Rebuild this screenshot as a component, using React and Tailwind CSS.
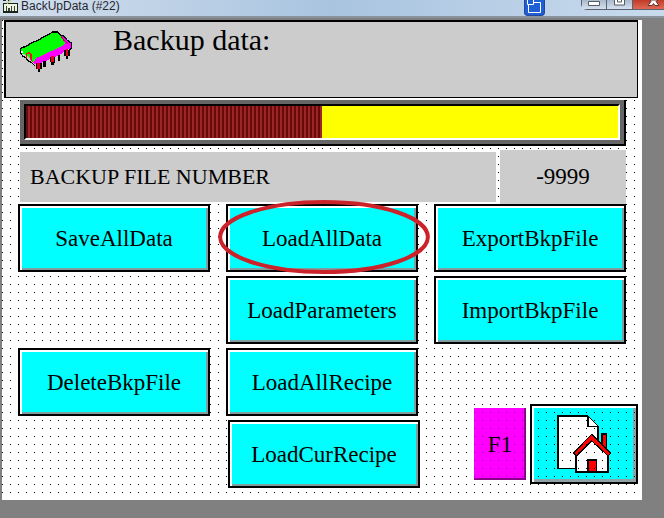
import React, { useState } from 'react';

const actions = [
    { label: 'SaveAllData', place: 'col-start-1 row-start-1' },
    { label: 'LoadAllData', place: 'col-start-2 row-start-1', circled: true },
    { label: 'ExportBkpFile', place: 'col-start-3 row-start-1' },
    { label: 'LoadParameters', place: 'col-start-2 row-start-2' },
    { label: 'ImportBkpFile', place: 'col-start-3 row-start-2' },
    { label: 'DeleteBkpFile', place: 'col-start-1 row-start-3' },
    { label: 'LoadAllRecipe', place: 'col-start-2 row-start-3' },
    { label: 'LoadCurRecipe', place: 'col-start-2 row-start-4 ml-0.5 -mr-0.5' },
];

const AppIcon = () => (
    <svg width="16" height="13" viewBox="0 0 16 13" shapeRendering="crispEdges" aria-hidden="true">
        <path d="M0 0h3v1H0zM5 0h2v1H5z" fill="#222" />
        <path d="M0 3h15v10H0z" fill="#1c2418" />
        <path d="M1 4h13v7H1z" fill="#eef3df" />
        <path d="M3 6h1v5H3zM5 8h2v3H5zM8 6h1v5H8zM11 6h1v5h-1z" fill="#39443a" />
        <path d="M3 3l3-3h2L5 4z" fill="#b9c98a" />
    </svg>
);

const ChipIcon = () => (
    <svg width="54" height="43" viewBox="58 88 162 129" shapeRendering="crispEdges" aria-hidden="true">
        {/* body */}
        <path d="M184 106l8 2 10 12 12 8v12l-10 8-28 16-26 12-38 16-10-4-10-12 6-8 84-42z" fill="#f0f" />
        {/* pins */}
        <path d="M108 186h18v18h-4v10h-8v-8h-6zM130 180h8v20h-8zM151 170h15v16h-4v6h-8v-8h-3zM174 162h8v18h-8zM194 148h17v18h-5v8h-7v-8h-5z" fill="#000" />
        <path d="M113 186h8v20h-8zM155 166h7v19h-7zM198 146h7v20h-7z" fill="#e80020" />
        <path d="M186 104l6 2 10 12 13 9v16l-6 6" fill="none" stroke="#000" strokeWidth="4" />
        {/* top face */}
        <path d="M62 160v-16l22-10 10-6 26-12 12-8 18-8 8-6h16l12 10 4 12 6 12-6 6-30 15-28 13-22 10-8 12-22-20-8-4z" fill="#0f0" />
        <path d="M62 160v-16l20-9 12-7 26-12 12-8 18-8 8-6h17l10 12" fill="none" stroke="#000" strokeWidth="4" />
        <path d="M64 158l6 10 8 2 6 10 10 4 12 12" fill="none" stroke="#000" strokeWidth="4" />
        <path d="M67 150v8" stroke="#fff" strokeWidth="4" />
        <path d="M80 172v-12l5-3h6l3 4v14l4 8" fill="none" stroke="#f01010" strokeWidth="4" />
        <path d="M184 106l8 12 12 10" fill="none" stroke="#c00060" strokeWidth="3" />
    </svg>
);

const HomeIcon = () => (
    <svg width="55" height="58" viewBox="48 27 165 174" shapeRendering="crispEdges" aria-hidden="true">
        <path d="M51 30h89l30 30v127H51z" fill="#fff" stroke="#000" strokeWidth="5" />
        <path d="M140 30v31h30" fill="#fff" stroke="#000" strokeWidth="5" />
        <path d="M183 84h13v46l-13-12z" fill="#f00" stroke="#000" strokeWidth="4" />
        <path d="M105 138l47-45 49 45v60h-96z" fill="#fff" stroke="#000" strokeWidth="5" />
        <path d="M98 141l54-56 57 56-8 9-49-46-46 46z" fill="#f00" stroke="#000" strokeWidth="3" />
        <path d="M141 162h25v36h-25z" fill="#f00" stroke="#000" strokeWidth="4" />
    </svg>
);

const TitleBar = () => (
    <header className="flex h-[18px] items-start border-b-2 border-[#8a939c] bg-linear-to-r from-[#d3dfed] via-[#a9c4e0] to-[#c9daec] pl-[3px]">
        <AppIcon />
        <h1 className="ml-0.5 font-['Liberation_Sans',Arial,sans-serif] text-xs leading-3 text-[#26262e]">BackUpData (#22)</h1>
        <button aria-label="Switch window" className="mr-9 ml-auto h-4 w-[21px] rounded-b-sm border border-t-0 border-[#24479c] bg-[#1f5fd6]">
            <svg width="19" height="15" viewBox="0 0 19 15" fill="none" stroke="#fff" aria-hidden="true">
                <path d="M8.500 2.500h7v10h-12v-8" />
                <path d="M2.500 0v4.500h6v-4.500" />
            </svg>
        </button>
        <div className="flex h-[10px] rounded-bl-md border-b border-l border-[#59626e]">
            <button aria-label="Minimize" className="w-[25px] border-r border-[#59626e] bg-linear-to-b from-[#a9bacd] to-[#d5e1ee]">
                <svg width="24" height="9" viewBox="0 0 24 9" aria-hidden="true">
                    <path d="M6.500 1.500h11v4h-11z" fill="#fff" stroke="#555c66" />
                </svg>
            </button>
            <button aria-label="Maximize" className="w-[26px] border-r border-[#59626e] bg-linear-to-b from-[#a9bacd] to-[#d5e1ee]">
                <svg width="25" height="9" viewBox="0 0 25 9" aria-hidden="true">
                    <path d="M7.500 -2v7h10v-7M10.500 -1v3h4v-3" fill="#fff" stroke="#555c66" />
                </svg>
            </button>
            <button aria-label="Close" className="w-[31px] bg-linear-to-b from-[#c03a28] to-[#df6a54]">
                <svg width="31" height="9" viewBox="0 0 31 9" aria-hidden="true">
                    <path d="M17 0h8l-2 1.500 3 4h-4l-1.500-2-1.500 2h-4l3-4z" fill="#fff" stroke="#6b3030" />
                </svg>
            </button>
        </div>
    </header>
);

const ActionButton = ({ label, place, circled }) => (
    <div className={`relative ${place}`}>
        <button className="h-full w-full border-2 border-black bg-[#0ff] pt-0.5 text-[23px] leading-7 shadow-[inset_2px_2px_#fff,inset_-2px_-2px_#7f9c9f]">
            {label}
        </button>
        {circled && (
            <svg className="pointer-events-none absolute -top-1 -left-2 z-10 h-[74px] w-[calc(100%+20px)] overflow-visible" aria-hidden="true">
                <ellipse cx="50%" cy="50%" rx="49%" ry="35" fill="none" stroke="#cc2229" strokeWidth="4" />
            </svg>
        )}
    </div>
);

const App = () => {
    const [progress] = useState(50);
    const [fileNumber] = useState(-9999);

    return (
        <div className="min-h-screen bg-[#808080] font-['Liberation_Serif','Times_New_Roman',serif] text-black">
            <TitleBar />

            <main className="mt-0.5 mr-[22px] ml-0.5 bg-white bg-[conic-gradient(from_270deg_at_1px_1px,#000_90deg,transparent_90deg)] bg-[length:8px_8px] pb-3">
                {/* Heading */}
                <section className="mr-1 ml-0.5 flex h-[78px] border-t-2 border-r border-b border-l-2 border-black bg-[#ccc] pt-0.5 pl-[13px]">
                    <div className="mt-1.5">
                        <ChipIcon />
                    </div>
                    <h2 className="ml-10 text-[30px] leading-8">Backup data:</h2>
                </section>

                {/* Progress */}
                <div className="mt-0.5 mr-4 ml-[18px] border-r-2 border-b-2 border-black">
                    <div className="border-4 border-[#666]">
                        <div
                            role="progressbar"
                            aria-label="Backup progress"
                            aria-valuenow={progress}
                            className="h-9 border-2 border-t-black border-r-white border-b-white border-l-black bg-[#ff0]"
                        >
                            <div
                                className="h-full bg-[repeating-linear-gradient(90deg,#660a0a_0,#660a0a_2px,#9c2626_2px,#9c2626_4px)]"
                                style={{ width: `${progress}%` }}
                            />
                        </div>
                    </div>
                </div>

                {/* File number */}
                <div className="mt-1 mr-4 ml-[18px] flex h-[54px] gap-1">
                    <label htmlFor="file-number" className="my-0.5 flex flex-1 items-center bg-[#ccc] pl-2.5 text-[22px] leading-7">
                        BACKUP FILE NUMBER
                    </label>
                    <input
                        id="file-number"
                        readOnly
                        value={fileNumber}
                        className="w-[126px] bg-[#ccc] text-center text-[23px] leading-7"
                    />
                </div>

                {/* Actions */}
                <div className="grid grid-cols-3 grid-rows-[repeat(4,68px)] gap-x-4 gap-y-1 px-4">
                    {actions.map(action => (
                        <ActionButton key={action.label} {...action} />
                    ))}
                    <div className="col-start-3 row-span-2 row-start-3 -mr-3 mb-1 flex items-center justify-end gap-1 self-end">
                        <button className="h-[72px] w-[52px] bg-[#f0f] bg-[conic-gradient(from_270deg_at_1px_1px,#80c_90deg,transparent_90deg)] bg-[length:8px_8px] bg-[position:0_4px] pt-0.5 text-[23px] leading-7 shadow-[inset_-2px_-2px_#8a008a]">
                            F1
                        </button>
                        <button
                            aria-label="Home"
                            className="relative flex h-20 w-[108px] items-center justify-center border-2 border-black bg-[#0ff] shadow-[inset_2px_2px_#fff,inset_-3px_-3px_#8fa3a6]"
                        >
                            <HomeIcon />
                            <span className="absolute inset-0 bg-[conic-gradient(from_270deg_at_1px_1px,#000_90deg,transparent_90deg)] bg-[length:8px_8px] bg-[position:6px_6px]" />
                        </button>
                    </div>
                </div>
            </main>
        </div>
    );
};

export default App;
